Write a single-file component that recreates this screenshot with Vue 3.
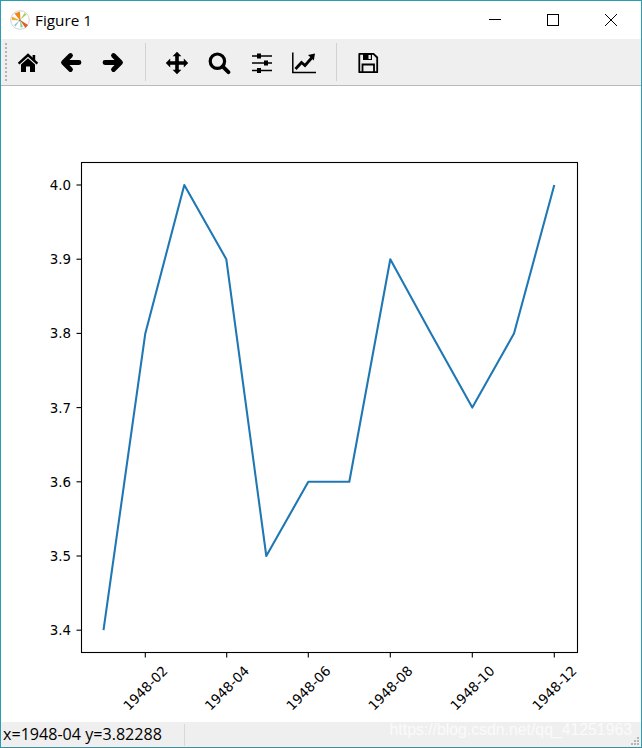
<script setup>
const xs = [103.5, 145.3, 184.3, 226.3, 266.3, 308.3, 349.3, 390.3, 431, 472.3, 514, 554.3]
const vals = [3.4, 3.8, 4.0, 3.9, 3.5, 3.6, 3.6, 3.9, 3.8, 3.7, 3.8, 4.0]
const yOf = v => 185 + (4.0 - v) * 742
const points = xs.map((x, i) => `${x},${yOf(vals[i]).toFixed(1)}`).join(' ')
const yTicks = [4.0, 3.9, 3.8, 3.7, 3.6, 3.5, 3.4].map(v => ({ label: v.toFixed(1), y: yOf(v) }))
const xTicks = [
  { label: '1948-02', x: 145.3 },
  { label: '1948-04', x: 226.7 },
  { label: '1948-06', x: 308.3 },
  { label: '1948-08', x: 390.3 },
  { label: '1948-10', x: 472.3 },
  { label: '1948-12', x: 554.3 }
]
const grip = [[6, 0], [3, 3], [6, 3], [0, 6], [3, 6], [6, 6]]
</script>

<template>
  <div class="window">
    <header class="titlebar">
      <svg class="logo" width="20" height="20" viewBox="0 0 20 20">
        <circle cx="10" cy="10" r="9.3" fill="#fff" stroke="#d0d0d0" />
        <path d="M10.5 11 L4.5 3.5 L10 1.5 Z" fill="#f0851c" />
        <path d="M10 10.5 L2 6.5 L1.8 10 Z" fill="#f2a93b" />
        <path d="M10 10 L14.5 3 L16.5 4.5 Z" fill="#a5d04f" />
        <path d="M9.5 9.5 L18 15 L15.5 18 Z" fill="#dd5f27" />
        <path d="M10 10 L4 15 L5.5 16.5 Z" fill="#86c9dc" />
        <path d="M10 10 L10.5 17.5 L13 17 Z" fill="#86cc92" />
        <circle cx="10" cy="10.5" r="1.1" fill="#888" />
      </svg>
      <span class="title">Figure 1</span>
      <div class="controls">
        <svg class="ctl" width="46" height="14" viewBox="0 0 46 14"><path d="M17 6.5 H29" stroke="#000" fill="none" /></svg>
        <svg class="ctl" width="46" height="14" viewBox="0 0 46 14"><rect x="17.5" y="1.5" width="11" height="11" stroke="#000" fill="none" /></svg>
        <svg class="ctl" width="46" height="14" viewBox="0 0 46 14"><path d="M17 1 L29 13 M29 1 L17 13" stroke="#000" fill="none" /></svg>
      </div>
    </header>

    <div class="toolbar">
      <div class="handle"></div>
      <button class="tool">
        <svg width="24" height="24" viewBox="0 0 24 24">
          <path d="M2.6 12.6 L12 4 L21.4 12.6" fill="none" stroke="#000" stroke-width="2.4" />
          <path d="M16.6 4 H19.2 V9 H16.6 Z" fill="#000" />
          <path d="M5 13.4 L12 7.2 L19 13.4 V21 H14 V15.5 H10 V21 H5 Z" fill="#000" />
        </svg>
      </button>
      <button class="tool">
        <svg width="24" height="24" viewBox="0 0 24 24">
          <path d="M11.5 4.5 L4.5 11.5 L11.5 18.5 M5.5 11.5 H20" fill="none" stroke="#000" stroke-width="4.8" stroke-linecap="round" stroke-linejoin="round" />
        </svg>
      </button>
      <button class="tool">
        <svg width="24" height="24" viewBox="0 0 24 24">
          <path d="M12.5 4.5 L19.5 11.5 L12.5 18.5 M18.5 11.5 H4" fill="none" stroke="#000" stroke-width="4.8" stroke-linecap="round" stroke-linejoin="round" />
        </svg>
      </button>
      <div class="sep"></div>
      <button class="tool">
        <svg width="24" height="24" viewBox="0 0 24 24">
          <path d="M12 0.8 L16.4 5.2 H13.8 V10.2 H18.8 V7.6 L23.2 12 L18.8 16.4 V13.8 H13.8 V18.8 H16.4 L12 23.2 L7.6 18.8 H10.2 V13.8 H5.2 V16.4 L0.8 12 L5.2 7.6 V10.2 H10.2 V5.2 H7.6 Z" fill="#000" />
        </svg>
      </button>
      <button class="tool">
        <svg width="24" height="24" viewBox="0 0 24 24">
          <circle cx="10.4" cy="10.2" r="7.2" fill="none" stroke="#000" stroke-width="3.2" />
          <path d="M15.6 15.4 L21.4 21.2" stroke="#000" stroke-width="3.8" stroke-linecap="round" />
        </svg>
      </button>
      <button class="tool">
        <svg width="24" height="24" viewBox="0 0 24 24">
          <path d="M2 5 H22 M2 12 H22 M2 19.5 H22" stroke="#000" stroke-width="1.5" />
          <rect x="7" y="2.5" width="4" height="5" fill="#000" />
          <rect x="14" y="9.5" width="4" height="5" fill="#000" />
          <rect x="7" y="17" width="4" height="5" fill="#000" />
        </svg>
      </button>
      <button class="tool">
        <svg width="24" height="24" viewBox="0 0 24 24">
          <path d="M0.8 1.5 V21.5 H24" fill="none" stroke="#000" stroke-width="1.5" />
          <path d="M3.5 18 L9.5 11.5 L13 14.5 L20 6.5" fill="none" stroke="#000" stroke-width="2.8" />
          <path d="M16 4 L23 2.5 L21.8 9.5 Z" fill="#000" />
        </svg>
      </button>
      <div class="sep"></div>
      <button class="tool">
        <svg width="24" height="24" viewBox="0 0 24 24">
          <path d="M3.3 2.8 H17.5 L21.2 6.5 V21.2 H3.3 Z" fill="none" stroke="#000" stroke-width="1.8" stroke-linejoin="round" />
          <path d="M7 3 H16 V9 H7 Z" fill="#000" />
          <path d="M12.5 4 H14.8 V8 H12.5 Z" fill="#f0f0f0" />
          <path d="M6.5 21 V13.5 H18 V21" fill="none" stroke="#000" stroke-width="1.8" />
        </svg>
      </button>
    </div>

    <svg class="plot" width="640" height="636" viewBox="1 86 640 636">
      <polyline :points="points" fill="none" stroke="#1f77b4" stroke-width="2.08" stroke-linejoin="round" />
      <rect x="81.5" y="162.5" width="496" height="490" fill="none" stroke="#000" stroke-width="1.1" />
      <g v-for="t in yTicks" :key="t.label">
        <line x1="76.5" x2="81" :y1="t.y" :y2="t.y" stroke="#000" stroke-width="1.1" />
        <text class="tick" x="71" :y="t.y + 5" text-anchor="end">{{ t.label }}</text>
      </g>
      <g v-for="t in xTicks" :key="t.label">
        <line :x1="t.x" :x2="t.x" y1="653" y2="657.5" stroke="#000" stroke-width="1.1" />
        <text class="tick" :x="t.x" y="693" text-anchor="middle" :transform="`rotate(-45 ${t.x} 688)`">{{ t.label }}</text>
      </g>
    </svg>

    <footer class="statusbar">
      <span class="coords">x=1948-04 y=3.82288</span>
      <div class="status-sep"></div>
      <span class="watermark">https://blog.csdn.net/qq_41251963</span>
      <svg class="grip" width="8" height="8" viewBox="0 0 8 8">
        <rect v-for="(g, i) in grip" :key="i" :x="g[0]" :y="g[1]" width="2" height="2" fill="#b4b4b4" />
      </svg>
    </footer>
  </div>
</template>

<style>
html, body { margin: 0; background: #fff; }
</style>

<style scoped>
.window {
  width: 642px;
  height: 748px;
  box-sizing: border-box;
  border: 1px solid #2b9db2;
  border-bottom-color: #3f8c9c;
  display: flex;
  flex-direction: column;
  background: #fff;
  overflow: hidden;
  font-family: "Open Sans", "Noto Sans", sans-serif;
  color: #000;
}
.titlebar {
  height: 38px;
  flex: none;
  display: flex;
  align-items: center;
  padding-left: 9px;
  box-sizing: border-box;
}
.logo { flex: none; }
.title {
  margin-left: 5px;
  font-size: 15.3px;
  line-height: 20px;
}
.controls {
  margin-left: auto;
  display: flex;
  margin-top: -1px;
  padding-right: 7px;
  gap: 12px;
}
.toolbar {
  height: 47px;
  flex: none;
  box-sizing: border-box;
  background: #efefef;
  border-bottom: 1px solid #bababa;
  display: flex;
  align-items: center;
}
.handle {
  width: 2px;
  height: 38px;
  margin-left: 4px;
  flex: none;
  background-image: repeating-linear-gradient(to bottom, #b4b4b4 0 2px, transparent 2px 4px);
}
.tool {
  width: 42.5px;
  height: 46px;
  flex: none;
  padding: 2px 0 0;
  border: 0;
  background: transparent;
  display: flex;
  align-items: center;
  justify-content: center;
}
.sep {
  width: 1px;
  height: 38px;
  flex: none;
  margin: 0 10px;
  background: #d2d2d2;
}
.plot {
  display: block;
  flex: none;
}
.tick {
  font-family: "DejaVu Sans", sans-serif;
  font-size: 13.4px;
  fill: #000;
}
.statusbar {
  flex: 1;
  background: #efefef;
  display: flex;
  align-items: center;
  position: relative;
  min-height: 0;
}
.coords {
  margin-left: 2px;
  width: 181px;
  font-size: 16.1px;
  line-height: 25px;
  white-space: nowrap;
  flex: none;
}
.status-sep {
  width: 1px;
  height: 22px;
  background: #d8d8d8;
  flex: none;
}
.watermark {
  position: absolute;
  right: 9px;
  top: -2px;
  font-family: "Liberation Sans", sans-serif;
  font-size: 15.8px;
  line-height: 20px;
  color: rgba(255, 255, 255, 0.72);
  white-space: nowrap;
}
.grip {
  position: absolute;
  right: 2px;
  bottom: 2px;
}
</style>
